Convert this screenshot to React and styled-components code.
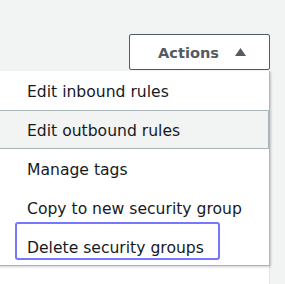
import React from 'react';
import styled, { createGlobalStyle } from 'styled-components';

const GlobalStyle = createGlobalStyle`
  html, body {
    margin: 0;
    padding: 0;
    background: #f2f3f3;
    font-family: "DejaVu Sans", "Liberation Sans", sans-serif;
    overflow: hidden;
  }
`;

const Page = styled.div`
  width: 285px;
  height: 284px;
  padding: 34px 15px 0 0;
  box-sizing: border-box;
  display: flex;
  flex-direction: column;
  align-items: flex-end;
`;

const ActionsButton = styled.button`
  width: 141px;
  height: 36px;
  box-sizing: border-box;
  border: 1px solid #545b64;
  border-radius: 2px;
  background: #fff;
  color: #545b64;
  font-family: inherit;
  font-weight: bold;
  font-size: 14.6px;
  display: flex;
  align-items: center;
  justify-content: flex-end;
  gap: 15px;
  padding: 0 22px 0 0;
  cursor: pointer;
`;

const Caret = styled.svg`
  width: 13px;
  height: 10px;
  display: block;
`;

const Panel = styled.div`
  position: relative;
  margin-top: 1px;
  width: 271px;
  flex: 1;
  background: #fff;
  border-right: 1px solid #dfe3e3;
  box-sizing: border-box;
`;

const Menu = styled.ul`
  position: absolute;
  top: 0;
  left: -10px;
  right: -1px;
  margin: 0;
  padding: 0;
  list-style: none;
  background: #fff;
  border: 1px solid #aab7b8;
  border-top: none;
  box-shadow: 1px 1px 2px rgba(0, 22, 28, 0.2);
`;

const Item = styled.li`
  position: relative;
  height: ${p => (p.$last ? '38px' : '39px')};
  box-sizing: border-box;
  display: flex;
  align-items: center;
  margin-left: 9px;
  padding: 3px 0 0 27px;
  font-size: 15.6px;
  color: #16191f;
  white-space: nowrap;
  border: 1px solid ${p => (p.$active ? '#aab7b8' : 'transparent')};
  background: ${p => (p.$active ? '#f2f3f3' : '#fff')};

  ${p =>
    p.$focused &&
    `
    &::after {
      content: '';
      position: absolute;
      left: 15px;
      top: -6px;
      width: 205px;
      height: 38px;
      box-sizing: border-box;
      border: 2px solid #7676ff;
      border-radius: 3px;
    }
  `}
`;

const items = [
  { label: 'Edit inbound rules' },
  { label: 'Edit outbound rules', active: true },
  { label: 'Manage tags' },
  { label: 'Copy to new security group' },
  { label: 'Delete security groups', focused: true, last: true },
];

const App = () => (
  <>
    <GlobalStyle />
    <Page>
      <ActionsButton>
        Actions
        <Caret viewBox="0 0 13 10">
          <path d="M6.5 1 L12 9 L1 9 Z" fill="#545b64" />
        </Caret>
      </ActionsButton>
      <Panel>
        <Menu>
          {items.map(it => (
            <Item
              key={it.label}
              $active={it.active}
              $focused={it.focused}
              $last={it.last}
            >
              {it.label}
            </Item>
          ))}
        </Menu>
      </Panel>
    </Page>
  </>
);

export default App;
